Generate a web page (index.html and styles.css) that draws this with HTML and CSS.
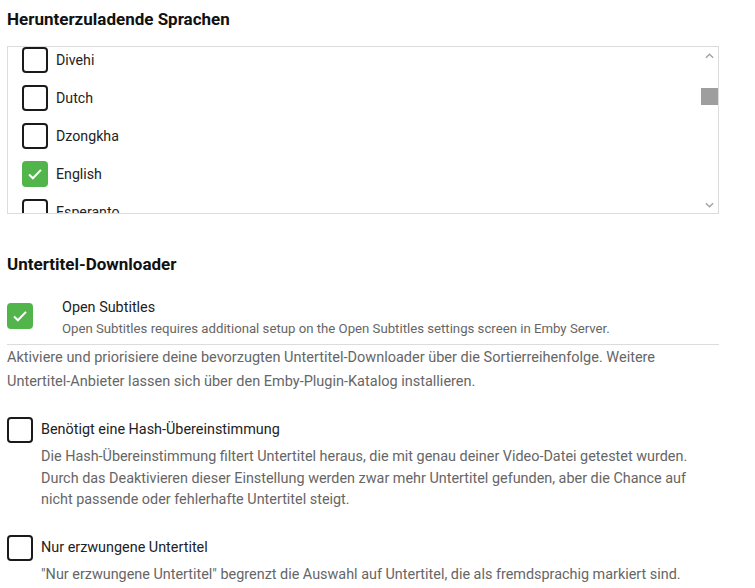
FILE: index.html
```html
<!DOCTYPE html>
<html lang="de">
<head>
<meta charset="utf-8">
<link rel="stylesheet" href="styles.css">
</head>
<body>
<main class="page">
  <h2 class="section-title">Herunterzuladende Sprachen</h2>
  <div class="listbox">
    <div class="listbox-viewport">
      <ul class="lang-list">
        <li class="lang-row"><span class="cb"></span><span class="lang-label">Divehi</span></li>
        <li class="lang-row"><span class="cb"></span><span class="lang-label">Dutch</span></li>
        <li class="lang-row"><span class="cb"></span><span class="lang-label">Dzongkha</span></li>
        <li class="lang-row"><span class="cb cb-checked"><svg viewBox="0 0 24 24" class="check"><path d="M5.5 12.5l4.2 4.2 8.8-9.2"/></svg></span><span class="lang-label">English</span></li>
        <li class="lang-row"><span class="cb"></span><span class="lang-label">Esperanto</span></li>
      </ul>
    </div>
    <div class="scrollbar">
      <div class="sb-btn"><svg viewBox="0 0 10 6" class="sb-arrow"><path d="M1 5l4-4 4 4"/></svg></div>
      <div class="sb-track"><div class="sb-thumb"></div></div>
      <div class="sb-btn"><svg viewBox="0 0 10 6" class="sb-arrow"><path d="M1 1l4 4 4-4"/></svg></div>
    </div>
  </div>

  <h2 class="section-title section-title-2">Untertitel-Downloader</h2>
  <div class="provider">
    <span class="cb cb-checked provider-cb"><svg viewBox="0 0 24 24" class="check"><path d="M5.5 12.5l4.2 4.2 8.8-9.2"/></svg></span>
    <div class="provider-text">
      <div class="provider-name">Open Subtitles</div>
      <div class="provider-note">Open Subtitles requires additional setup on the Open Subtitles settings screen in Emby Server.</div>
    </div>
  </div>
  <p class="help">Aktiviere und priorisiere deine bevorzugten Untertitel-Downloader über die Sortierreihenfolge. Weitere Untertitel-Anbieter lassen sich über den Emby-Plugin-Katalog installieren.</p>

  <div class="option">
    <div class="option-head"><span class="cb"></span><span class="option-label">Benötigt eine Hash-Übereinstimmung</span></div>
    <p class="option-desc">Die Hash-Übereinstimmung filtert Untertitel heraus, die mit genau deiner Video-Datei getestet wurden. Durch das Deaktivieren dieser Einstellung werden zwar mehr Untertitel gefunden, aber die Chance auf nicht passende oder fehlerhafte Untertitel steigt.</p>
  </div>
  <div class="option">
    <div class="option-head"><span class="cb"></span><span class="option-label">Nur erzwungene Untertitel</span></div>
    <p class="option-desc">"Nur erzwungene Untertitel" begrenzt die Auswahl auf Untertitel, die als fremdsprachig markiert sind.</p>
  </div>
</main>
</body>
</html>
```

FILE: styles.css
```css
* { box-sizing: border-box; }
html, body { margin: 0; padding: 0; background: #fff; }
body {
  font-family: Roboto, "Noto Sans", "Liberation Sans", sans-serif;
  color: #222;
  font-size: 14.4px;
}
.page {
  width: 712px;
  margin-left: 7px;
  padding-top: 9px;
}
.section-title {
  margin: 0;
  font-size: 17px;
  line-height: 20px;
  font-weight: 700;
  color: #111;
}
.listbox {
  margin-top: 17px;
  height: 168px;
  border: 1px solid #dcdcdc;
  display: flex;
}
.listbox-viewport {
  flex: 1;
  overflow: hidden;
}
.lang-list {
  list-style: none;
  margin: -6px 0 0 0;
  padding: 0 0 0 14px;
}
.lang-row {
  height: 38px;
  display: flex;
  align-items: center;
  gap: 8px;
}
.lang-label {
  font-size: 14.2px;
  color: #222;
}
.cb {
  flex: none;
  width: 26px;
  height: 26px;
  border: 2px solid #1a1a1a;
  border-radius: 4px;
  display: flex;
  align-items: center;
  justify-content: center;
}
.cb-checked {
  background: #52b54b;
  border-color: #52b54b;
}
.check {
  width: 22px;
  height: 22px;
  fill: none;
  stroke: #fff;
  stroke-width: 2.2;
}
.scrollbar {
  width: 17px;
  display: flex;
  flex-direction: column;
}
.sb-btn {
  height: 17px;
  display: flex;
  align-items: center;
  justify-content: center;
}
.sb-arrow {
  width: 9px;
  height: 6px;
  fill: none;
  stroke: #a3a3a3;
  stroke-width: 1.6;
}
.sb-track { flex: 1; }
.sb-thumb {
  margin-top: 24px;
  height: 17px;
  background: #9e9e9e;
}
.section-title-2 { margin-top: 40px; }
.provider {
  margin-top: 24px;
  display: flex;
  align-items: flex-start;
  padding-bottom: 5px;
  border-bottom: 1px solid #dcdcdc;
}
.provider-cb { margin-top: 5px; }
.provider-text { margin-left: 29px; }
.provider-name {
  font-size: 14.4px;
  line-height: 20px;
  color: #222;
}
.provider-note {
  font-size: 13.2px;
  line-height: 21px;
  color: #666;
}
.help {
  margin: 1px 0 0 0;
  font-size: 14.5px;
  line-height: 24px;
  color: #666;
}
.option { margin-top: 23px; }
.option + .option { margin-top: 24px; }
.option-head {
  display: flex;
  align-items: center;
  gap: 8px;
}
.option-label {
  font-size: 14.4px;
  line-height: 20px;
  color: #222;
}
.option-desc {
  margin: 3px 0 0 34px;
  font-size: 14.4px;
  line-height: 21.5px;
  color: #666;
}
```
